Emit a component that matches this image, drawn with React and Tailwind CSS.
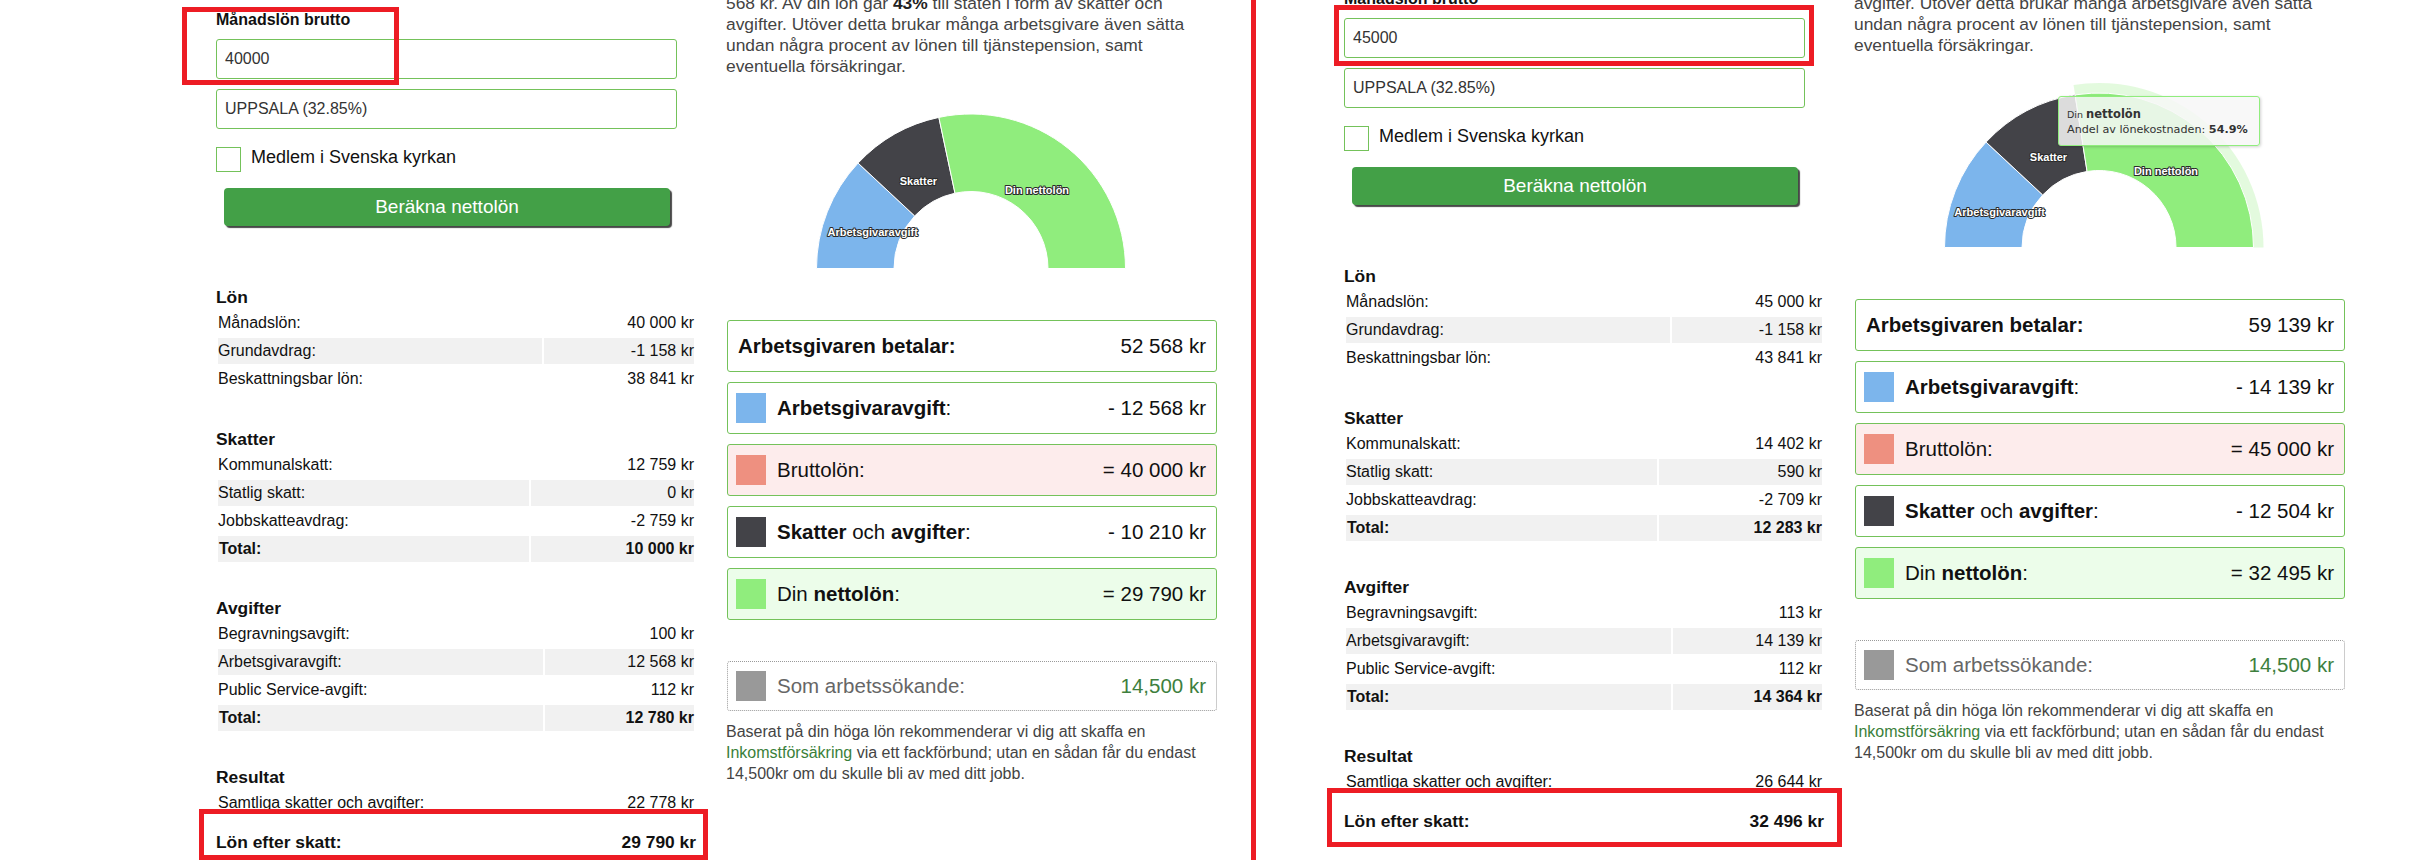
import React from "react";

const L = {
  input: "40000",
  intro: (
    <>
      568 kr. Av din lön går <b className="text-[#222]">43%</b> till staten i form av skatter och
    </>
  ),
  lon: [
    ["Månadslön:", "40 000 kr"],
    ["Grundavdrag:", "-1 158 kr"],
    ["Beskattningsbar lön:", "38 841 kr"],
  ],
  skatter: [
    ["Kommunalskatt:", "12 759 kr"],
    ["Statlig skatt:", "0 kr"],
    ["Jobbskatteavdrag:", "-2 759 kr"],
    ["Total:", "10 000 kr", true],
  ],
  avgifter: [
    ["Begravningsavgift:", "100 kr"],
    ["Arbetsgivaravgift:", "12 568 kr"],
    ["Public Service-avgift:", "112 kr"],
    ["Total:", "12 780 kr", true],
  ],
  samtliga: "22 778 kr",
  efter: "29 790 kr",
  betalar: "52 568 kr",
  arbavg: "- 12 568 kr",
  brutto: "= 40 000 kr",
  skatt: "- 10 210 kr",
  netto: "= 29 790 kr",
  a1: (12568 / 52568) * 180,
  a2: (22778 / 52568) * 180,
  labels: [
    [-98.3, -36.3],
    [-52.6, -88],
    [66, -78.7],
  ],
  tooltip: false,
  annots: [
    "left-[-34px] top-[7px] w-[217px] h-[78px]",
    "left-[-17px] top-[809px] w-[509px] h-[51px]",
  ],
};

const R = {
  input: "45000",
  intro: (
    <>
      139 kr. Av din lön går <b className="text-[#222]">45%</b> till staten i form av skatter och
    </>
  ),
  lon: [
    ["Månadslön:", "45 000 kr"],
    ["Grundavdrag:", "-1 158 kr"],
    ["Beskattningsbar lön:", "43 841 kr"],
  ],
  skatter: [
    ["Kommunalskatt:", "14 402 kr"],
    ["Statlig skatt:", "590 kr"],
    ["Jobbskatteavdrag:", "-2 709 kr"],
    ["Total:", "12 283 kr", true],
  ],
  avgifter: [
    ["Begravningsavgift:", "113 kr"],
    ["Arbetsgivaravgift:", "14 139 kr"],
    ["Public Service-avgift:", "112 kr"],
    ["Total:", "14 364 kr", true],
  ],
  samtliga: "26 644 kr",
  efter: "32 496 kr",
  betalar: "59 139 kr",
  arbavg: "- 14 139 kr",
  brutto: "= 45 000 kr",
  skatt: "- 12 504 kr",
  netto: "= 32 495 kr",
  a1: (14139 / 59139) * 180,
  a2: (26643 / 59139) * 180,
  labels: [
    [-99.4, -36],
    [-50.5, -90.3],
    [67, -77],
  ],
  tooltip: true,
  annots: [
    "left-[-10px] top-[26px] w-[480px] h-[61px]",
    "left-[-17px] top-[809px] w-[515px] h-[59px]",
  ],
};

function pt(cx, cy, r, deg) {
  const t = (deg * Math.PI) / 180;
  return [cx - r * Math.cos(t), cy - r * Math.sin(t)];
}

function arc(cx, cy, Ro, Ri, a0, a1) {
  const [x0, y0] = pt(cx, cy, Ro, a0);
  const [x1, y1] = pt(cx, cy, Ro, a1);
  const [x2, y2] = pt(cx, cy, Ri, a1);
  const [x3, y3] = pt(cx, cy, Ri, a0);
  return `M${x0} ${y0} A${Ro} ${Ro} 0 0 1 ${x1} ${y1} L${x2} ${y2} A${Ri} ${Ri} 0 0 0 ${x3} ${y3} Z`;
}

function Chart({ d }) {
  const cx = 245;
  const cy = 191.5;
  const Ro = 154.5;
  const Ri = 77;
  const names = ["Arbetsgivaravgift", "Skatter", "Din nettolön"];
  return (
    <div className="relative h-[233.5px]">
      <svg width="491" height="233.5" className="absolute left-0 top-0">
        {d.tooltip && (
          <path d={arc(cx, cy, Ro + 10, Ro, d.a2, 180)} fill="#90ed7d" fillOpacity="0.25" />
        )}
        <path d={arc(cx, cy, Ro, Ri, 0, d.a1)} fill="#7cb5ec" stroke="#ffffff" strokeWidth="1" strokeLinejoin="round" />
        <path d={arc(cx, cy, Ro, Ri, d.a1, d.a2)} fill="#434348" stroke="#ffffff" strokeWidth="1" strokeLinejoin="round" />
        <path d={arc(cx, cy, Ro, Ri, d.a2, 180)} fill="#90ed7d" stroke="#ffffff" strokeWidth="1" strokeLinejoin="round" />
        {names.map((n, i) => (
          <text
            key={n}
            x={cx + d.labels[i][0]}
            y={cy + d.labels[i][1]}
            textAnchor="middle"
            dominantBaseline="central"
            fontFamily="Liberation Sans, Arial, sans-serif"
            fontWeight="bold"
            fontSize="11"
            fill="#ffffff"
            stroke="#2a2a2a"
            strokeWidth="2"
            strokeLinejoin="round"
            paintOrder="stroke"
          >
            {n}
          </text>
        ))}
      </svg>
      {d.tooltip && (
        <div className="absolute left-[204px] top-[40.5px] w-[202px] h-[50px] rounded-[3px] border border-[#90ed7d] bg-[rgba(247,247,247,0.85)] shadow-[1px_1px_3px_rgba(0,0,0,0.18)] pl-[8px] pt-[8px] font-['DejaVu_Sans',sans-serif] text-[#333] whitespace-nowrap">
          <div className="leading-[15px]">
            <span className="text-[9.5px]">Din </span>
            <span className="text-[11.5px] font-bold">nettolön</span>
          </div>
          <div className="leading-[15px] text-[11.2px]">
            Andel av lönekostnaden: <b>54.9%</b>
          </div>
        </div>
      )}
    </div>
  );
}

function Row({ label, value, bold, shaded, vw }) {
  const bg = shaded ? "bg-[#f1f1f1]" : "";
  return (
    <div className={`flex gap-[2px] ${bold ? "font-bold" : ""}`}>
      <div className={`flex-1 h-[26px] flex items-center ${bold ? "pl-[1px]" : ""} ${bg}`}>{label}</div>
      <div className={`${vw} h-[26px] flex items-center justify-end ${bg}`}>{value}</div>
    </div>
  );
}

function Section({ title, rows, vw, className }) {
  return (
    <div className={className}>
      <div className="h-[22px] leading-[22px] text-[17.4px] font-bold text-[#111]">{title}</div>
      <div className="mt-[2px] px-[2px] flex flex-col gap-[2px] text-[16px] text-[#111]">
        {rows.map((r, i) => (
          <Row key={i} label={r[0]} value={r[1]} bold={r[2]} shaded={i % 2 === 1} vw={vw} />
        ))}
      </div>
    </div>
  );
}

function Card({ color, bg, label, value }) {
  return (
    <div className={`h-[52px] rounded-[3px] border border-[#74c25a] flex items-center pl-[8px] pr-[10px] text-[20.5px] text-[#111] ${bg}`}>
      <div className={`w-[30px] h-[30px] mr-[11px] shrink-0 ${color}`} />
      <div>{label}</div>
      <div className="ml-auto">{value}</div>
    </div>
  );
}

function Panel({ d, className }) {
  return (
    <div className={`relative flex shrink-0 w-[1001px] ${className}`}>
      <div className="w-[480px] flex flex-col">
        <div className="mt-[10px] h-[20px] leading-[20px] text-[16px] font-bold text-[#111]">Månadslön brutto</div>
        <div className="mt-[9px] w-[461px] h-[40px] rounded-[3px] border border-[#74c25a] flex items-center pl-[8px] text-[16px] text-[#333]">
          {d.input}
        </div>
        <div className="mt-[10px] w-[461px] h-[40px] rounded-[3px] border border-[#74c25a] flex items-center pl-[8px] text-[16px] text-[#333]">
          UPPSALA (32.85%)
        </div>
        <div className="mt-[18px] flex items-start">
          <div className="w-[25px] h-[25px] border border-[#74c25a] bg-white shrink-0" />
          <div className="ml-[10px] text-[18px] leading-[20px] text-[#111]">Medlem i Svenska kyrkan</div>
        </div>
        <div className="mt-[16px] ml-[8px] w-[446px] h-[38px] rounded-[4px] bg-[#43a047] shadow-[2px_2px_1px_rgba(40,40,40,0.85)] flex items-center justify-center text-white text-[19px]">
          Beräkna nettolön
        </div>
        <Section className="mt-[60px]" title="Lön" rows={d.lon} vw="w-[150px]" />
        <Section className="mt-[36px]" title="Skatter" rows={d.skatter} vw="w-[163px]" />
        <Section className="mt-[35px]" title="Avgifter" rows={d.avgifter} vw="w-[149px]" />
        <Section className="mt-[35px]" title="Resultat" rows={[["Samtliga skatter och avgifter:", d.samtliga]]} vw="w-[150px]" />
        <div className="mt-[13px] h-[26px] flex items-center justify-between text-[17.4px] font-bold text-[#111]">
          <span>Lön efter skatt:</span>
          <span>{d.efter}</span>
        </div>
      </div>

      <div className="ml-[30px] w-[491px] flex flex-col">
        <p className="-mt-[7.5px] text-[17.4px] leading-[21px] text-[#444] whitespace-nowrap">
          {d.intro}
          <br />
          avgifter. Utöver detta brukar många arbetsgivare även sätta
          <br />
          undan några procent av lönen till tjänstepension, samt
          <br />
          eventuella försäkringar.
        </p>
        <Chart d={d} />
        <div className="mt-[10px] ml-[1px] w-[490px] flex flex-col gap-[10px]">
          <div className="h-[52px] rounded-[3px] border border-[#74c25a] flex items-center pl-[10px] pr-[10px] text-[20.5px] text-[#111] bg-white">
            <span className="font-bold">Arbetsgivaren betalar:</span>
            <span className="ml-auto">{d.betalar}</span>
          </div>
          <Card
            color="bg-[#7cb5ec]"
            bg="bg-white"
            label={
              <>
                <b>Arbetsgivaravgift</b>:
              </>
            }
            value={d.arbavg}
          />
          <Card color="bg-[#ee9080]" bg="bg-[#fdecec]" label="Bruttolön:" value={d.brutto} />
          <Card
            color="bg-[#434348]"
            bg="bg-white"
            label={
              <>
                <b>Skatter</b> och <b>avgifter</b>:
              </>
            }
            value={d.skatt}
          />
          <Card
            color="bg-[#90ed7d]"
            bg="bg-[#ecfdea]"
            label={
              <>
                Din <b>nettolön</b>:
              </>
            }
            value={d.netto}
          />
        </div>
        <div className="mt-[41px] ml-[1px] w-[490px] h-[50px] rounded-[3px] border border-dotted border-[#9a9a9a] flex items-center pl-[8px] pr-[10px] text-[20.5px]">
          <div className="w-[30px] h-[30px] mr-[11px] bg-[#999999] shrink-0" />
          <span className="text-[#666]">Som arbetssökande:</span>
          <span className="ml-auto text-[#3e7f3e]">14,500 kr</span>
        </div>
        <p className="mt-[10px] text-[16px] leading-[21px] text-[#444] whitespace-nowrap">
          Baserat på din höga lön rekommenderar vi dig att skaffa en
          <br />
          <span className="text-[#3a7f3a]">Inkomstförsäkring</span> via ett fackförbund; utan en sådan får du endast
          <br />
          14,500kr om du skulle bli av med ditt jobb.
        </p>
      </div>

      {d.annots.map((c, i) => (
        <div key={i} className={`absolute border-[5px] border-[#ed1c24] pointer-events-none ${c}`} />
      ))}
    </div>
  );
}

export default function App() {
  return (
    <div className="w-[2426px] h-[860px] overflow-hidden bg-white flex items-start font-['Liberation_Sans',Arial,sans-serif]">
      <Panel d={L} className="ml-[216px]" />
      <div className="ml-[34px] w-[5px] h-[860px] bg-[#ed1c24] shrink-0" />
      <Panel d={R} className="ml-[88px] -mt-[21px]" />
    </div>
  );
}
